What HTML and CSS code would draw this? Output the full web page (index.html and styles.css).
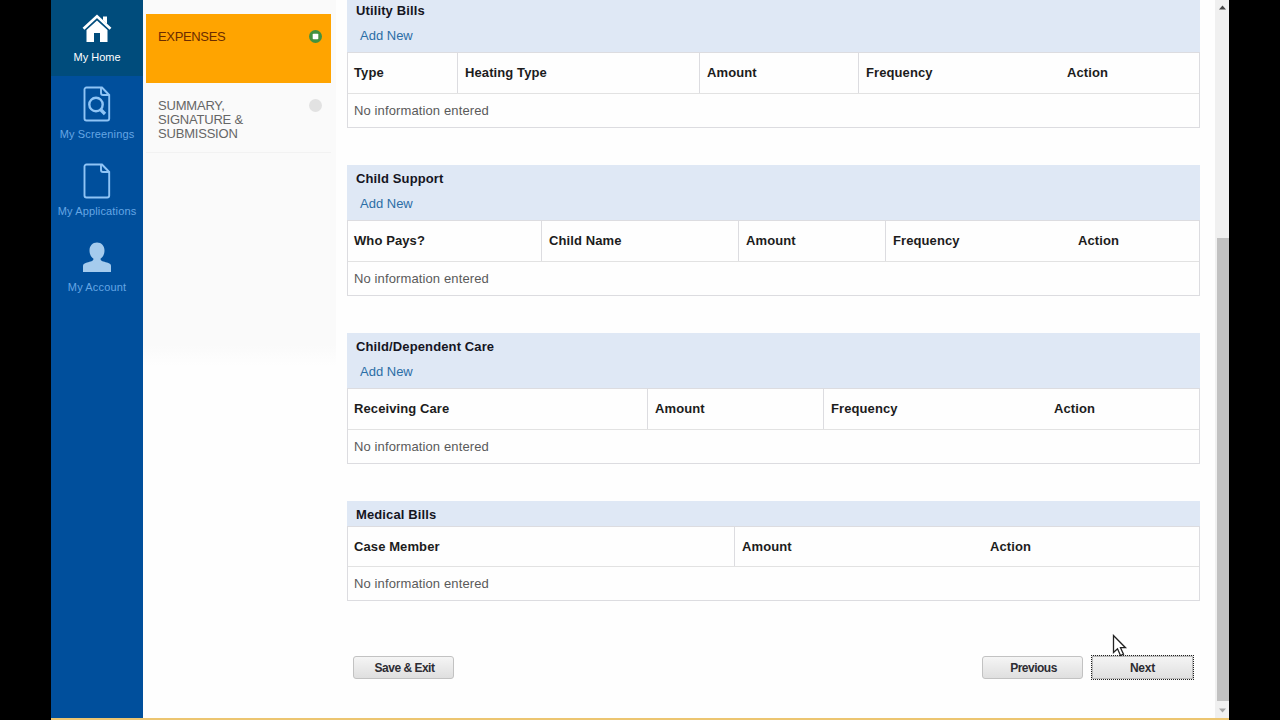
FILE: index.html
```html
<!DOCTYPE html>
<html lang="en">
<head>
<meta charset="utf-8">
<title>Expenses</title>
<link rel="stylesheet" href="styles.css">
</head>
<body>
<div class="app">
  <nav class="sidebar">
    <a class="nav-item active">
      <svg class="icon" width="30" height="30" viewBox="0 0 30 30"><path d="M1.500 15.800 15 3.300l13.500 12.500" fill="none" stroke="#fff" stroke-width="2.700"/><path d="M21 3.500h4v7.500l-4-3.800zM15 7.500l10.500 9.500V29h-7.500v-9h-6v9H4.500V17z" fill="#fff"/></svg>
      <span>My Home</span>
    </a>
    <a class="nav-item">
      <svg class="icon" width="30" height="36" viewBox="0 0 30 36"><g fill="none" stroke="#8fc4f5" stroke-width="1.900"><path d="M4.500 1.500H20l7.200 7.500v23.500a2 2 0 0 1-2 2H4.500a2 2 0 0 1-2-2v-29a2 2 0 0 1 2-2z"/><path d="M19 1.500V7a2 2 0 0 0 2 2h6.200"/><circle cx="14" cy="18.500" r="6.700" stroke-width="2.400"/><path d="m18.300 23.300 4.700 4.700" stroke-width="3.400"/></g></svg>
      <span>My Screenings</span>
    </a>
    <a class="nav-item">
      <svg class="icon" width="30" height="36" viewBox="0 0 30 36"><g fill="none" stroke="#8fc4f5" stroke-width="1.900"><path d="M4.500 1.500H20l7.200 7.500v23.500a2 2 0 0 1-2 2H4.500a2 2 0 0 1-2-2v-29a2 2 0 0 1 2-2z"/><path d="M19 1.500V7a2 2 0 0 0 2 2h6.200"/></g></svg>
      <span>My Applications</span>
    </a>
    <a class="nav-item">
      <svg class="icon" width="30" height="32" viewBox="0 0 30 32"><path d="M15 1.500c4.500 0 7.500 3.500 7.500 8 0 3.500-1.500 6.500-4 8.300 0 2.200 3 2.900 6.500 3.700 3 .8 4 1.800 4 3.500v6H1v-6c0-1.700 1-2.700 4-3.500 3.500-.8 6.500-1.500 6.500-3.700-2.500-1.800-4-4.800-4-8.300 0-4.500 3-8 7.500-8z" fill="#a5cbed"/></svg>
      <span>My Account</span>
    </a>
  </nav>

  <aside class="steps">
    <div class="step current"><span>EXPENSES</span><svg width="13" height="13" viewBox="0 0 13 13"><circle cx="6.500" cy="6.500" r="6.500" fill="#43923f"/><rect x="3.700" y="3.700" width="5.600" height="5.600" rx=".8" fill="#fff"/></svg></div>
    <div class="step"><span>SUMMARY,<br>SIGNATURE &amp;<br>SUBMISSION</span><svg width="13" height="13" viewBox="0 0 13 13"><circle cx="6.500" cy="6.500" r="6.500" fill="#e2e2e2"/></svg></div>
  </aside>

  <main class="main">
    <section class="panel">
      <header class="panel-head"><h2>Utility Bills</h2><a>Add New</a></header>
      <div class="grid">
        <div class="row utility"><b>Type</b><b>Heating Type</b><b>Amount</b><b>Frequency</b><b>Action</b></div>
        <p class="empty">No information entered</p>
      </div>
    </section>
    <section class="panel">
      <header class="panel-head"><h2>Child Support</h2><a>Add New</a></header>
      <div class="grid">
        <div class="row support"><b>Who Pays?</b><b>Child Name</b><b>Amount</b><b>Frequency</b><b>Action</b></div>
        <p class="empty">No information entered</p>
      </div>
    </section>
    <section class="panel">
      <header class="panel-head"><h2>Child/Dependent Care</h2><a>Add New</a></header>
      <div class="grid">
        <div class="row care"><b>Receiving Care</b><b>Amount</b><b>Frequency</b><b>Action</b></div>
        <p class="empty">No information entered</p>
      </div>
    </section>
    <section class="panel medical">
      <header class="panel-head"><h2>Medical Bills</h2></header>
      <div class="grid">
        <div class="row bills"><b>Case Member</b><b>Amount</b><b>Action</b></div>
        <p class="empty">No information entered</p>
      </div>
    </section>
    <footer class="buttons">
      <button class="btn save">Save &amp; Exit</button>
      <button class="btn">Previous</button>
      <button class="btn focused">Next</button>
    </footer>
  </main>

  <div class="scrollbar">
    <svg width="14" height="14" viewBox="0 0 14 14"><path d="M4 9.500 7.500 5.500 11 9.500z" fill="#444"/></svg>
    <div class="thumb"></div>
    <svg width="14" height="17" viewBox="0 0 14 17"><path d="M4 7.500h7L7.500 11.500z" fill="#a5a5a5"/></svg>
  </div>
</div>
<svg class="cursor" width="16" height="24" viewBox="0 0 16 24"><path d="M1.500 1.500v17l4-3.700 3 6.700 3-1.300-3-6.500h5z" fill="#fff" stroke="#222" stroke-width="1.300"/></svg>
</body>
</html>
```
FILE: styles.css
```css
* { box-sizing: border-box; }
body {
  margin: 0;
  height: 720px;
  overflow: hidden;
  background: #000;
  font: 13px/16px "Liberation Sans", Arial, sans-serif;
}
.app {
  display: flex;
  width: 1178px;
  height: 720px;
  margin-left: 51px;
  background: #fefefe;
  border-bottom: 2px solid #ecc570;
}

.sidebar { width: 92px; background: #004f9c; }
.nav-item {
  display: flex;
  flex-direction: column;
  align-items: center;
  height: 76.700px;
  padding-top: 10px;
  color: #65a6e4;
  font-size: 11px;
  line-height: 14px;
  letter-spacing: 0.15px;
  white-space: nowrap;
}
.nav-item.active { height: 76px; padding-top: 13px; background: #004c7c; color: #fff; letter-spacing: 0; }
.nav-item .icon { flex: none; margin-bottom: 5px; }
.nav-item.active .icon { margin-bottom: 7px; }
.nav-item:last-child { padding-top: 12px; }
.nav-item:last-child .icon { margin-bottom: 7px; }

.steps {
  width: 193px;
  height: 366px;
  padding: 14px 5px 0 3px;
  background: linear-gradient(#fafafa 345px, #fefefe);
}
.step {
  display: flex;
  justify-content: space-between;
  width: 185px;
  height: 70px;
  padding: 16px 9px 0 12px;
  color: #666;
  border-bottom: 1px solid #f2f2f2;
  line-height: 14px;
  letter-spacing: -0.2px;
}
.step.current { height: 69px; background: #ffa400; color: #6b2c00; border: 0; letter-spacing: -0.35px; }
.step span { white-space: nowrap; }
.step svg { flex: none; }

.main { width: 853px; margin: -3px 0 0 11px; }
.panel { margin-bottom: 37px; }
.panel-head { height: 55px; padding: 6px 9px 0; background: #dfe8f5; }
.panel-head h2 { margin: 0; font-size: 13px; line-height: 16px; letter-spacing: 0.12px; color: #15151f; }
.panel-head a { display: block; margin: 9px 0 0 4px; color: #2c6ea6; }
.medical .panel-head { height: 25px; }
.grid { border: 1px solid #dcdce0; }
.row { display: grid; height: 41px; border-bottom: 1px solid #e2e2e2; color: #1c1c1c; letter-spacing: 0.1px; }
.medical .row { height: 40px; }
.row b { padding: 12px 0 0 7px; border-left: 1px solid #dcdce0; }
.row b:first-child, .row b:last-child { border-left: 0; }
.row b:first-child { padding-left: 6px; }
.utility { grid-template-columns: 109px 242px 159px 202px 1fr; }
.support { grid-template-columns: 193px 197px 147px 186px 1fr; }
.care { grid-template-columns: 299px 176px 224px 1fr; }
.bills { grid-template-columns: 386px 249px 1fr; }
.empty { margin: 0; height: 33px; padding: 9px 6px 0; color: #5a5a5a; letter-spacing: 0.12px; }

.buttons { display: flex; margin: 54px 6px 0 6px; align-items: center; }
.btn {
  width: 101px;
  height: 23px;
  padding: 0 0 0 2px;
  border: 1px solid #c2c2c2;
  border-radius: 3px;
  background: linear-gradient(#f5f5f5, #dfdfdf);
  color: #2d2d33;
  font: bold 12px/20px "Liberation Sans", Arial, sans-serif;
  letter-spacing: -0.5px;
}
.btn.save { margin-right: auto; }
.btn.focused { width: 103px; height: 25px; margin-left: 8px; border: 1px dotted #222; border-radius: 0; box-shadow: inset 0 0 0 1px #bbb; letter-spacing: -0.2px; padding: 0; }

.scrollbar { display: flex; flex-direction: column; width: 14px; margin-left: auto; background: #f0f0f0; }
.thumb { width: 12px; height: 464px; margin: 224px 0 0 2px; background: #c1c1c1; }
.cursor { position: absolute; left: 1112px; top: 634px; }
```
